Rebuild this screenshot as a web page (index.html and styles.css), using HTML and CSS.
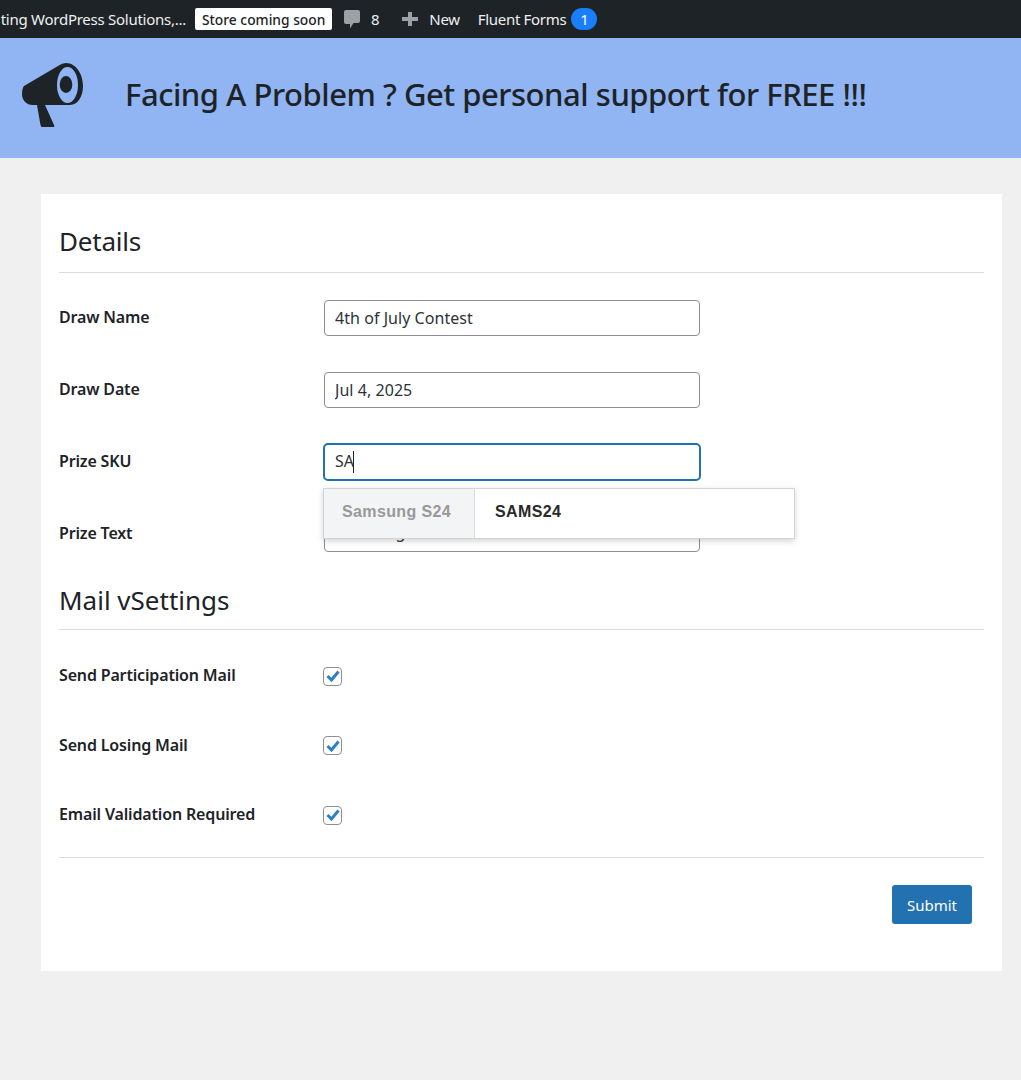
FILE: index.html
```html
<!DOCTYPE html>
<html lang="en">
<head>
<meta charset="utf-8">
<title>Details</title>
<link rel="stylesheet" href="styles.css">
</head>
<body>
<header class="adminbar">
  <span class="site">ting WordPress Solutions,...</span>
  <span class="store">Store coming soon</span>
  <span class="bar-item comments">
    <svg class="comment-icon" viewBox="0 0 16 20" width="16" height="20"><path fill="#9ca1a7" d="M2 1h12a2 2 0 0 1 2 2v9a2 2 0 0 1-2 2H9.500L6 19.500V15H2a2 2 0 0 1-2-2V3a2 2 0 0 1 2-2z"/></svg>
    <span>8</span>
  </span>
  <span class="bar-item new">
    <svg viewBox="0 0 16 16" width="16" height="16"><path fill="#9ca1a7" d="M6 1h4v5h6v4h-6v5H6v-5H0V6h6z"/></svg>
    <span>New</span>
  </span>
  <span class="bar-item fluent">Fluent Forms<span class="count">1</span></span>
</header>

<section class="banner">
  <svg class="horn" viewBox="0 0 64 66" width="64" height="66">
    <path fill="#1d2327" d="M3 23 L37 3 Q41 0 45 0 C55 0 62 11 62 23 C62 33 57 42 49 42 L24 42 L33 62 Q34 64 32 64 L21 64 Q20 64 19.500 62 L16 42 L12 42 C5 42 1 37 1 31 C1 27 2 24 3 23 Z"/>
    <ellipse fill="#91b4f3" cx="46.500" cy="22" rx="10.500" ry="18"/>
    <ellipse fill="#1d2327" cx="45" cy="21.500" rx="6.300" ry="8.500"/>
  </svg>
  <h1>Facing A Problem ? Get personal support for FREE !!!</h1>
</section>

<main class="card">
  <h2 class="section-title">Details</h2>
  <form class="fields">
    <div class="row"><label>Draw Name</label><input class="text" type="text" value="4th of July Contest"></div>
    <div class="row"><label>Draw Date</label><input class="text" type="text" value="Jul 4, 2025"></div>
    <div class="row">
      <label>Prize SKU</label>
      <div class="combo">
        <div class="text focused"><span>SA</span><i class="caret"></i></div>
        <div class="suggest">
          <span class="suggest-name">Samsung S24</span>
          <span class="suggest-sku">SAMS24</span>
        </div>
      </div>
    </div>
    <div class="row"><label>Prize Text</label><input class="text behind" type="text" value="Samsung"></div>
  </form>

  <h2 class="section-title mail">Mail vSettings</h2>
  <div class="checks">
    <div class="check-row"><label>Send Participation Mail</label><span class="box"><svg viewBox="0 0 16 16" width="16" height="16"><path fill="none" stroke="#2f7fc4" stroke-width="3" d="M2.500 8l4 4L13.500 3.500"/></svg></span></div>
    <div class="check-row"><label>Send Losing Mail</label><span class="box"><svg viewBox="0 0 16 16" width="16" height="16"><path fill="none" stroke="#2f7fc4" stroke-width="3" d="M2.500 8l4 4L13.500 3.500"/></svg></span></div>
    <div class="check-row"><label>Email Validation Required</label><span class="box"><svg viewBox="0 0 16 16" width="16" height="16"><path fill="none" stroke="#2f7fc4" stroke-width="3" d="M2.500 8l4 4L13.500 3.500"/></svg></span></div>
  </div>
  <div class="actions"><button class="submit" type="button">Submit</button></div>
</main>
</body>
</html>
```
FILE: styles.css
```css
* { box-sizing: border-box; }
html, body { margin: 0; padding: 0; }
body {
  width: 1021px;
  height: 1080px;
  overflow: hidden;
  background: #f0f0f1;
  color: #1d2327;
  font-family: "Noto Sans", "Open Sans", sans-serif;
}
.adminbar {
  display: flex;
  align-items: center;
  height: 38px;
  background: #1d2327;
  color: #f0f0f1;
  font-size: 15px;
  white-space: nowrap;
  overflow: hidden;
}
.site { width: 186px; flex: none; text-align: right; letter-spacing: -0.26px; }
.store {
  margin-left: 9px;
  padding: 0 7px;
  width: 137px;
  height: 22px;
  line-height: 23px;
  background: #fff;
  color: #1d2327;
  border-radius: 2px;
  font-size: 13.800px;
  font-weight: 500;
}
.bar-item { display: inline-flex; align-items: center; letter-spacing: -0.3px; }
.comments { margin-left: 12px; gap: 11px; }
.new { margin-left: 23px; gap: 11px; }
.fluent { margin-left: 18px; }
.count {
  margin-left: 5px;
  width: 26px;
  height: 22px;
  line-height: 22px;
  text-align: center;
  border-radius: 11px;
  background: #1a7efb;
  color: #fff;
}
.banner {
  display: flex;
  align-items: center;
  height: 120px;
  background: #91b4f3;
  padding-left: 21px;
}
.horn { flex: none; margin-top: -4px; }
.banner h1 {
  margin: -8px 0 0 40px;
  font-size: 31px;
  font-weight: 500;
  letter-spacing: -0.47px;
  white-space: nowrap;
}
.card {
  margin: 36px 19px 0 41px;
  height: 777px;
  background: #fff;
  padding: 29px 18px 0;
}
.section-title {
  margin: 0;
  height: 50px;
  font-size: 26px;
  font-weight: 400;
  line-height: 37px;
  border-bottom: 1px solid #dcdcde;
  letter-spacing: -0.2px;
}
.fields { padding-top: 27px; }
.row {
  display: flex;
  align-items: center;
  height: 36px;
  margin-bottom: 36px;
}
.row:last-child { margin-bottom: 0; }
label {
  flex: none;
  width: 265px;
  font-size: 16px;
  font-weight: 600;
  letter-spacing: -0.16px;
}
.row label { margin-top: -2px; }
.text {
  display: flex;
  align-items: center;
  width: 376px;
  height: 36px;
  padding: 0 10px;
  border: 1px solid #8c8f94;
  border-radius: 4px;
  background: #fff;
  color: #2c3338;
  font: inherit;
  font-size: 16px;
  letter-spacing: 0.05px;
  outline: none;
}
.behind { padding-bottom: 5px; }
.combo { position: relative; }
.focused {
  width: 378px;
  height: 38px;
  margin: -1px;
  padding: 0 0 2px 10px;
  border: 2px solid #2271b1;
  border-radius: 5px;
}
.caret { width: 1px; height: 22px; background: #1d2327; margin: 2px 0 0 -1px; }
.suggest {
  position: absolute;
  z-index: 2;
  top: 44px;
  left: -1px;
  display: flex;
  width: 472px;
  height: 51px;
  background: #fff;
  border: 1px solid #d3d4d6;
  box-shadow: 0 2px 6px rgba(0,0,0,.18);
  font-family: "Liberation Sans", Arial, sans-serif;
  font-size: 16px;
  font-weight: 700;
  line-height: 45px;
  letter-spacing: 0.38px;
}
.suggest-name {
  width: 151px;
  padding-left: 18px;
  background: #f3f4f5;
  border-right: 1px solid #dcdcde;
  color: #999;
}
.suggest-sku { padding-left: 20px; color: #2a2a2a; }
.mail { margin-top: 29px; height: 49px; line-height: 38px; letter-spacing: 0; }
.checks { padding-top: 27px; height: 228px; border-bottom: 1px solid #dcdcde; }
.check-row {
  display: flex;
  align-items: center;
  height: 36px;
  margin-bottom: 33.500px;
}
.box {
  display: flex;
  align-items: center;
  justify-content: center;
  width: 19px;
  height: 19px;
  margin-left: -1px;
  margin-top: 2px;
  border: 1px solid #8c8f94;
  border-radius: 4px;
  background: #fff;
}
.actions { display: flex; justify-content: flex-end; padding: 27px 12px 0 0; }
.submit {
  width: 80px;
  height: 39px;
  background: #2271b1;
  color: #fff;
  border: 0;
  border-radius: 3px;
  font: inherit;
  font-size: 15px;
}
```
